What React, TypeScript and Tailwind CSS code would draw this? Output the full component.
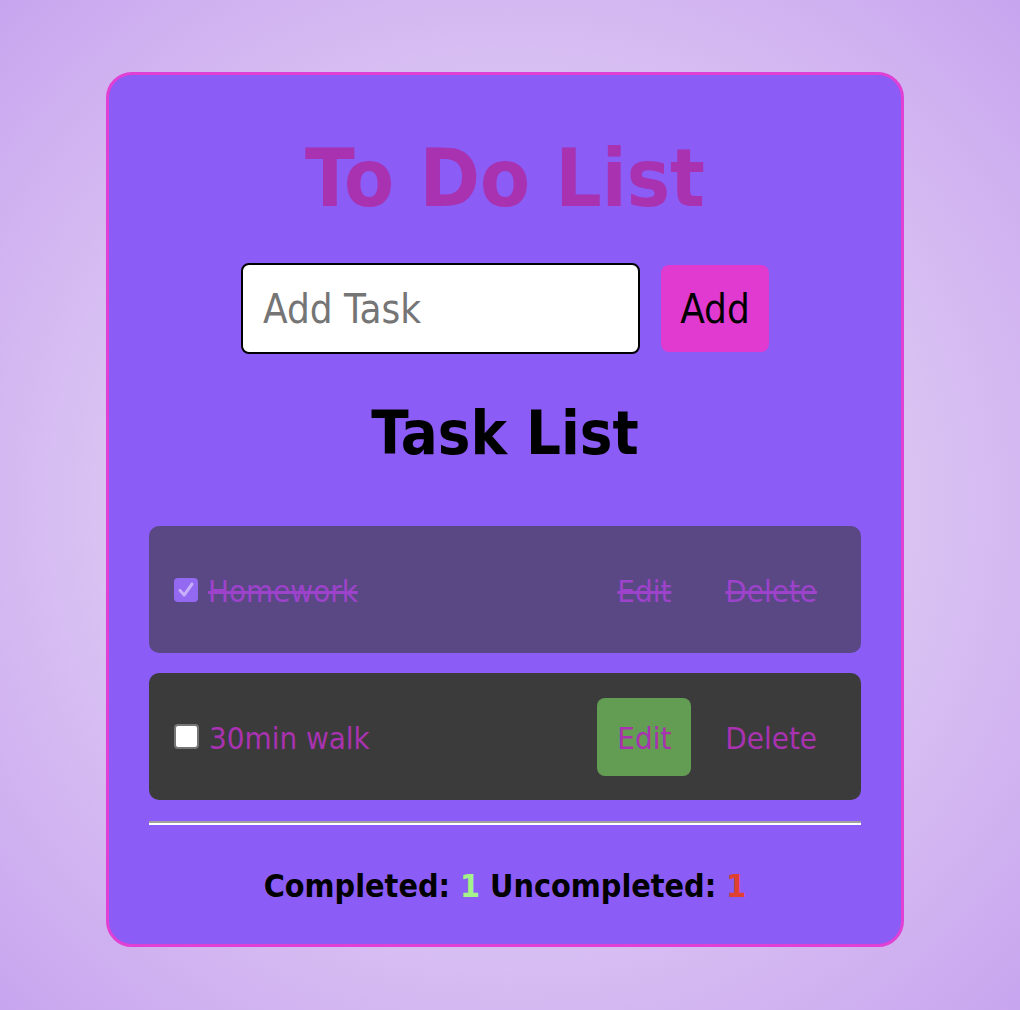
import React from "react";

const font = { fontFamily: '"DejaVu Sans Condensed", "DejaVu Sans", sans-serif' };

function Check({ checked }: { checked: boolean }) {
  if (checked) {
    return (
      <span className="flex h-[24px] w-[24px] shrink-0 items-center justify-center rounded-[4px] bg-[#9a72ee]">
        <svg viewBox="0 0 24 24" className="h-[22px] w-[22px]">
          <path d="M5.5 12.5 L10 17.5 L18.5 5.5" fill="none" stroke="#f1e6ff" strokeWidth="3.4" strokeLinecap="round" strokeLinejoin="round" />
        </svg>
      </span>
    );
  }
  return <span className="block h-[25px] w-[25px] shrink-0 rounded-[4px] border-2 border-[#767676] bg-white" />;
}

function Row({ text, done, editBg }: { text: string; done: boolean; editBg: boolean }) {
  return (
    <div
      className={`flex h-[127px] items-center rounded-[10px] bg-[#3b3b3b] pl-[25px] pr-[24px] text-[31px] text-[#a832b0] ${done ? "opacity-60 line-through" : ""}`}
    >
      <Check checked={done} />
      <span className="ml-[10px] flex-1 pt-[3px] leading-none">{text}</span>
      <div className="flex items-center gap-[14px]">
        <span className={`flex h-[78px] w-[94px] items-center justify-center rounded-[8px] pt-[3px] leading-none ${editBg ? "bg-[#639c53]" : ""}`}>Edit</span>
        <span className="flex h-[78px] items-center justify-center px-[20px] pt-[3px] leading-none">Delete</span>
      </div>
    </div>
  );
}

export default function App() {
  return (
    <div
      className="flex min-h-[1010px] w-full justify-center bg-[radial-gradient(ellipse_at_center,#e3d1f4_0%,#dcc6f3_50%,#c8a5ef_100%)] pr-[10px] pt-[72px]"
      style={font}
    >
      <div className="flex h-[875px] w-[798px] flex-col rounded-[26px] border-[3px] border-[#e040d3] bg-[#8b5cf6] px-[40px]">
        <h1 className="mt-[63px] text-center text-[81px] font-bold leading-none text-[#a832b0]">To Do List</h1>
        <div className="mt-[44px] flex items-center justify-center gap-[21px]">
          <div className="flex h-[91px] w-[399px] items-center rounded-[8px] border-2 border-black bg-white pl-[20px] text-[40px] leading-none text-[#757575]">
            Add Task
          </div>
          <div className="flex h-[87px] w-[108px] items-center justify-center rounded-[8px] bg-[#e03ad0] text-[40px] leading-none text-black">
            Add
          </div>
        </div>
        <h2 className="mt-[48px] text-center text-[61px] font-bold leading-none text-black">Task List</h2>
        <div className="mt-[63px] flex flex-col gap-[20px]">
          <Row text="Homework" done={true} editBg={false} />
          <Row text="30min walk" done={false} editBg={true} />
        </div>
        <div className="mt-[21px] h-0 border-t-2 border-b-2 border-t-[#a0a0a0] border-b-white" />
        <p className="mt-[45px] text-center text-[32px] font-bold leading-none text-black">
          Completed: <span className="text-[#a3f28a]">1</span> Uncompleted: <span className="text-[#e0402f]">1</span>
        </p>
      </div>
    </div>
  );
}
